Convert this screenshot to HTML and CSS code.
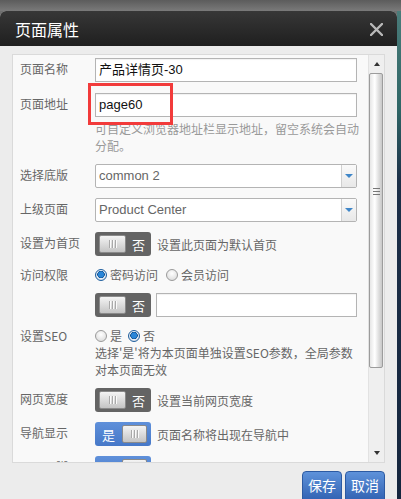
FILE: index.html
```html
<!DOCTYPE html>
<html lang="zh">
<head>
<meta charset="utf-8">
<title>页面属性</title>
<link rel="stylesheet" href="styles.css">
</head>
<body>
<div class="page">
  <div class="topstrip"></div>
  <div class="stage">
    <div class="dialog">
      <div class="dlg-head">
        <span class="dlg-title">页面属性</span>
        <svg class="close" width="13" height="13" viewBox="0 0 13 13"><path d="M1 1L12 12M12 1L1 12" stroke="#b9b9b9" stroke-width="2.4" stroke-linecap="round"/></svg>
      </div>
      <div class="dlg-body">
        <div class="panel">
          <div class="content">
            <div class="row first">
              <div class="lbl">页面名称</div>
              <div class="ctl"><div class="input">产品详情页-30</div></div>
            </div>
            <div class="row">
              <div class="lbl">页面地址</div>
              <div class="ctl anchor">
                <div class="input">page60</div>
                <div class="hint wide">可自定义浏览器地址栏显示地址，留空系统会自动分配。</div>
                <div class="redbox"></div>
              </div>
            </div>
            <div class="row">
              <div class="lbl">选择底版</div>
              <div class="ctl"><div class="select"><span class="sel-text">common 2</span><span class="sel-arrow"><i></i></span></div></div>
            </div>
            <div class="row">
              <div class="lbl">上级页面</div>
              <div class="ctl"><div class="select"><span class="sel-text">Product Center</span><span class="sel-arrow"><i></i></span></div></div>
            </div>
            <div class="row">
              <div class="lbl">设置为首页</div>
              <div class="ctl line">
                <span class="toggle off"><span class="knob"><b></b><b></b><b></b></span><span class="tg-text">否</span></span>
                <span class="desc">设置此页面为默认首页</span>
              </div>
            </div>
            <div class="row">
              <div class="lbl flat">访问权限</div>
              <div class="ctl radios">
                <span class="radio checked"></span><span class="rtext">密码访问</span>
                <span class="radio gap2"></span><span class="rtext">会员访问</span>
              </div>
            </div>
            <div class="row">
              <div class="lbl"></div>
              <div class="ctl line tight">
                <span class="toggle off"><span class="knob"><b></b><b></b><b></b></span><span class="tg-text">否</span></span>
                <div class="input grow"></div>
              </div>
            </div>
            <div class="row">
              <div class="lbl flat">设置SEO</div>
              <div class="ctl">
                <div class="radios">
                  <span class="radio"></span><span class="rtext">是</span>
                  <span class="radio gap3 checked"></span><span class="rtext">否</span>
                </div>
                <div class="hint dark wide">选择'是'将为本页面单独设置SEO参数，全局参数对本页面无效</div>
              </div>
            </div>
            <div class="row">
              <div class="lbl">网页宽度</div>
              <div class="ctl line">
                <span class="toggle off"><span class="knob"><b></b><b></b><b></b></span><span class="tg-text">否</span></span>
                <span class="desc">设置当前网页宽度</span>
              </div>
            </div>
            <div class="row">
              <div class="lbl">导航显示</div>
              <div class="ctl line">
                <span class="toggle on"><span class="tg-text">是</span><span class="knob"><b></b><b></b><b></b></span></span>
                <span class="desc">页面名称将出现在导航中</span>
              </div>
            </div>
            <div class="row">
              <div class="lbl">显示页脚</div>
              <div class="ctl line">
                <span class="toggle on"><span class="tg-text">是</span><span class="knob"><b></b><b></b><b></b></span></span>
                <span class="desc">该页面将显示页脚区域</span>
              </div>
            </div>
          </div>
          <div class="sbar">
            <div class="sb-btn"><i class="up"></i></div>
            <div class="sb-thumb"><span class="grip"><b></b><b></b><b></b></span></div>
            <div class="sb-track"></div>
            <div class="sb-btn"><i class="down"></i></div>
          </div>
        </div>
      </div>
      <div class="dlg-foot">
        <button class="btn">保存</button>
        <button class="btn">取消</button>
      </div>
    </div>
    <div class="backdrop"></div>
  </div>
</div>
</body>
</html>
```

FILE: styles.css
```css
* { box-sizing: border-box; }
html, body { margin: 0; padding: 0; }
body {
  width: 401px;
  height: 499px;
  overflow: hidden;
  background: #6e6e6e;
  font-family: "Noto Sans CJK SC", "Liberation Sans", sans-serif;
}
.page { display: flex; flex-direction: column; height: 499px; }
.topstrip {
  height: 11px;
  background: linear-gradient(#5c5c5c, #7a7a7a);
}
.stage { display: flex; flex: 1; min-height: 0; }
.backdrop {
  flex: 1;
  background: linear-gradient(#4a7c7a 0%, #2f6666 20%, #1c2f48 35%, #15263e 100%);
}
.dialog {
  width: 397px;
  display: flex;
  flex-direction: column;
  background: #ececec;
  border-radius: 6px 6px 0 0;
  overflow: hidden;
}
.dlg-head {
  height: 35px;
  flex: none;
  background: linear-gradient(#373737, #1f1f1f);
  display: flex;
  align-items: center;
  justify-content: space-between;
  padding: 0 14px 0 15px;
}
.dlg-title {
  color: #fff;
  font-size: 16px;
  line-height: 20px;
  margin-top: 1px;
}
.close { display: block; margin-top: 1px; }
.dlg-body { padding: 8px 12px 0 12px; }
.panel {
  height: 409px;
  border: 1px solid #dadada;
  background: #f9f9f9;
  display: flex;
  overflow: hidden;
}
.content {
  flex: 1;
  overflow: hidden;
  padding: 3px 11px 0 7px;
}
.row {
  display: grid;
  grid-template-columns: 75px 1fr;
  margin-bottom: 10px;
}
.row.first { margin-bottom: 11px; }
.lbl {
  font-size: 12px;
  color: #666;
  line-height: 17px;
  padding-top: 2px;
  white-space: nowrap;
}
.lbl.flat { padding-top: 0; }
.ctl { min-width: 0; }
.anchor { position: relative; }
.input {
  height: 24px;
  border: 1px solid #b4b4b4;
  background: #fff;
  box-shadow: inset 0 1px 1px rgba(0,0,0,0.06);
  font-family: "Liberation Sans", "Noto Sans CJK SC", sans-serif;
  font-size: 13px;
  line-height: 22px;
  color: #111;
  padding: 0 3px;
  white-space: nowrap;
}
.input.grow { flex: 1; }
.hint {
  font-size: 12px;
  line-height: 17px;
  color: #999;
  margin-top: 3px;
}
.hint.wide { margin-right: -6px; }
.hint.dark { color: #666; margin-top: 0; }
.redbox {
  position: absolute;
  left: -7px;
  top: -10px;
  width: 85px;
  height: 42px;
  border: 3px solid #f23b3b;
}
.select {
  height: 24px;
  border: 1px solid #b4b4b4;
  border-radius: 2px;
  background: #fff;
  display: flex;
  font-family: "Liberation Sans", sans-serif;
  font-size: 13px;
  color: #666;
}
.sel-text { flex: 1; line-height: 22px; padding-left: 3px; }
.sel-arrow {
  width: 15px;
  border-left: 1px solid #d0d0d0;
  background: linear-gradient(#fafafa, #e8e8e8);
  display: flex;
  align-items: center;
  justify-content: center;
}
.sel-arrow i {
  width: 0; height: 0;
  border-left: 4px solid transparent;
  border-right: 4px solid transparent;
  border-top: 4px solid #3f86c8;
}
.line { display: flex; align-items: center; gap: 6px; }
.line.tight { gap: 5px; }
.desc { font-size: 12px; color: #666; line-height: 17px; white-space: nowrap; }
.toggle {
  flex: none;
  width: 56px;
  height: 24px;
  border-radius: 3px;
  display: flex;
  align-items: center;
  padding: 0 4px;
  gap: 6px;
}
.toggle.off { background: #646464; }
.toggle.on { background: linear-gradient(#5f90da, #4678c8); padding-left: 7px; gap: 7px; }
.tg-text { color: #fff; font-size: 13px; line-height: 17px; }
.knob {
  width: 27px;
  height: 18px;
  border-radius: 2px;
  background: linear-gradient(#f4f4f4, #c4c4c4);
  border: 1px solid #8a8a8a;
  display: flex;
  align-items: center;
  justify-content: center;
  gap: 2px;
}
.knob b { width: 1px; height: 8px; background: #a9a9a9; box-shadow: 1px 0 0 #fafafa; }
.radios {
  display: flex;
  align-items: center;
  height: 17px;
  font-size: 12px;
  color: #666;
}
.radio {
  width: 12px;
  height: 12px;
  border-radius: 50%;
  border: 1px solid #9a9a9a;
  background: radial-gradient(circle at 50% 35%, #ffffff, #d6d6d6);
  margin-right: 3px;
  position: relative;
}
.radio.checked {
  border-color: #1f5f9e;
  background: radial-gradient(circle at 50% 45%, #2a86d8 0 2.5px, #0b4f90 3.5px, #e8eef5 4px, #c9d6e3 6px);
}
.radio.gap2 { margin-left: 8px; }
.radio.gap3 { margin-left: 6px; }
.rtext { line-height: 17px; }
.sbar {
  width: 16px;
  flex: none;
  background: #efefef;
  border-left: 1px solid #e2e2e2;
  display: flex;
  flex-direction: column;
}
.sb-btn {
  height: 18px;
  display: flex;
  align-items: center;
  justify-content: center;
}
.sb-btn i { width: 0; height: 0; border-left: 3.5px solid transparent; border-right: 3.5px solid transparent; }
.sb-btn i.up { border-bottom: 4px solid #333; }
.sb-btn i.down { border-top: 4px solid #333; }
.sb-thumb {
  height: 295px;
  margin: 0 1px 0 0;
  border: 1px solid #9c9c9c;
  border-radius: 2px;
  background: linear-gradient(90deg, #e6e6e6, #ffffff 40%, #dcdcdc 75%, #c8c8c8);
  display: flex;
  flex-direction: column;
  align-items: center;
  padding-top: 114px;
}
.grip { display: flex; flex-direction: column; gap: 2px; }
.grip b { width: 7px; height: 1px; background: #777; }
.sb-track { flex: 1; }
.dlg-foot {
  flex: 1;
  display: flex;
  justify-content: flex-end;
  align-items: flex-start;
  gap: 3px;
  padding: 8px 12px 0 0;
}
.btn {
  width: 40px;
  height: 32px;
  border: 1px solid #2c5aa2;
  border-radius: 4px 4px 0 0;
  background: linear-gradient(#5e92da, #2f5fb0);
  color: #fff;
  font-family: "Noto Sans CJK SC", sans-serif;
  font-size: 14px;
  padding: 0 0 4px;
  line-height: 20px;
}
```
